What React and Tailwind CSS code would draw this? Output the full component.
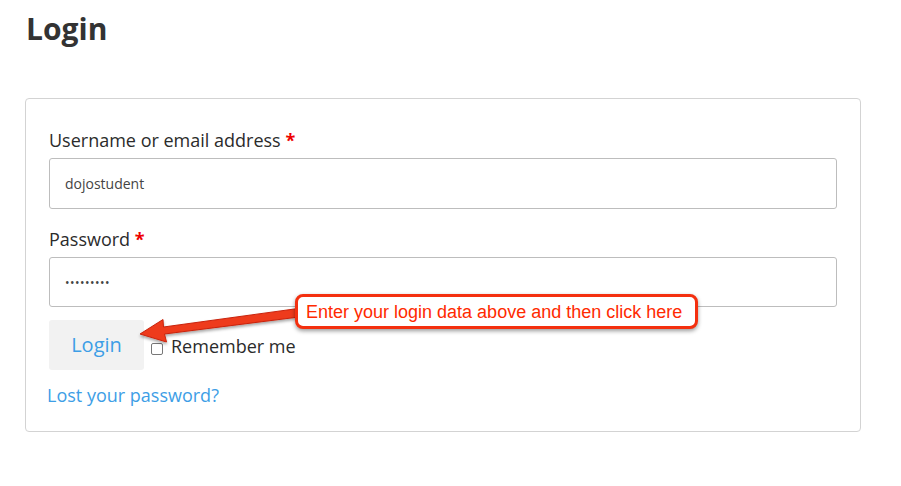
export default function App() {
  return (
    <div className="relative min-h-screen bg-white font-['Open_Sans',sans-serif] text-[#333]">
      <div className="pl-[26px] pt-[9px]">
        <h1 className="text-[30px] font-bold leading-[40px] text-[#333]">Login</h1>
      </div>

      <div className="ml-[25px] mt-[49px] w-[836px] rounded-[4px] border border-[#d3d3d3] px-[23px] pt-[29px] pb-[24px]">
        <label className="mb-[6px] block text-[18px] leading-[24px] text-[#2b2b2b]">
          Username or email address <span className="font-bold text-[#e00]">*</span>
        </label>
        <input
          type="text"
          readOnly
          defaultValue="dojostudent"
          className="block h-[51px] w-full rounded-[3px] border border-[#bdbdbd] bg-white px-[15px] text-[14px] text-[#444] outline-none"
        />

        <label className="mt-[18px] mb-[6px] block text-[18px] leading-[24px] text-[#2b2b2b]">
          Password <span className="font-bold text-[#e00]">*</span>
        </label>
        <input
          type="password"
          readOnly
          defaultValue="123456789"
          className="block h-[50px] w-full rounded-[3px] border border-[#bdbdbd] bg-white px-[15px] text-[12px] tracking-[0.5px] text-[#444] outline-none"
        />

        <div className="mt-[13px] flex items-center">
          <button className="h-[50px] w-[95px] rounded-[3px] bg-[#f2f2f2] text-[20px] text-[#3d9ee6]">
            Login
          </button>
          <span className="ml-[7px] mt-[8px] block h-[12px] w-[12px] rounded-[2px] border border-[#777] bg-white"></span>
          <span className="ml-[8px] mt-[2px] text-[18px] leading-[24px] text-[#2b2b2b]">Remember me</span>
        </div>

        <a className="mt-[13px] -ml-[2px] block text-[18px] leading-[24px] text-[#3d9ee6]" href="#">
          Lost your password?
        </a>
      </div>

      <svg className="pointer-events-none absolute left-0 top-0" width="901" height="486">
        <defs>
          <filter id="sh" x="-20%" y="-50%" width="140%" height="200%">
            <feDropShadow dx="0" dy="2" stdDeviation="1.5" floodColor="#000" floodOpacity="0.35" />
          </filter>
        </defs>
        <polygon
          filter="url(#sh)"
          points="140,334 163,319.5 163.5,327 298,308.5 299,317 164.5,334 166.5,342"
          fill="#ee3a1c"
          stroke="#c9240c"
          strokeWidth="1"
          strokeLinejoin="round"
        />
      </svg>

      <div className="absolute left-[295px] top-[294px] flex h-[35px] w-[403px] items-center rounded-[8px] border-[3px] border-[#f4300f] bg-white pl-[8px] shadow-[0_2px_4px_rgba(0,0,0,0.4)]">
        <span className="font-['Liberation_Sans',Arial,sans-serif] text-[18px] leading-none text-[#ff2a00]">
          Enter your login data above and then click here
        </span>
      </div>
    </div>
  );
}
